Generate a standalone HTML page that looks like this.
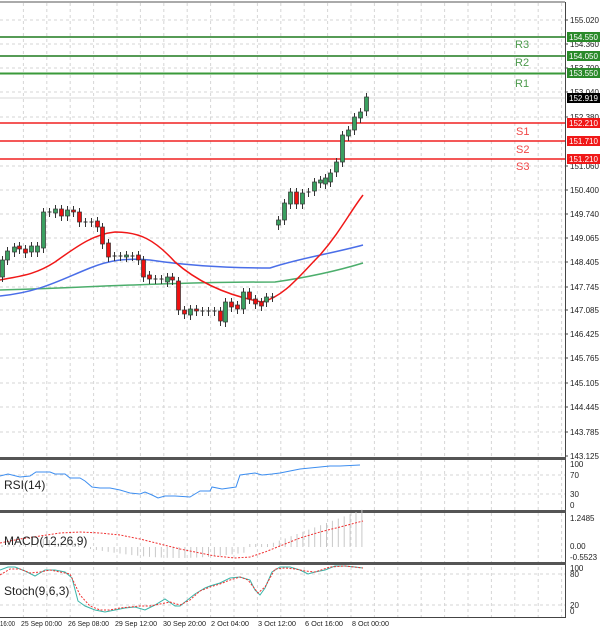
<!DOCTYPE html>
<html><head><meta charset="utf-8"><style>
html,body{margin:0;padding:0;background:#fff;}
svg{display:block;font-family:"Liberation Sans",sans-serif;}
</style></head><body>
<svg id="s" width="600" height="633" viewBox="0 0 600 633" xmlns="http://www.w3.org/2000/svg">
<rect width="600" height="633" fill="#fff"/>
<g id="grid" stroke="#d6d6d6" stroke-dasharray="3,3" stroke-width="1"></g>
<line x1="0" y1="2" x2="565" y2="2" stroke="#555" stroke-width="1"/>
<line x1="565.5" y1="2" x2="565.5" y2="617" stroke="#444" stroke-width="1"/>
<line x1="0" y1="617.5" x2="566" y2="617.5" stroke="#444"/>
<line x1="0" y1="37" x2="565" y2="37" stroke="#1e7a1e" stroke-width="1.5"/>
<line x1="0" y1="56" x2="565" y2="56" stroke="#1e7a1e" stroke-width="1.5"/>
<line x1="0" y1="73.5" x2="565" y2="73.5" stroke="#3a9a3a" stroke-width="2"/>
<line x1="0" y1="98" x2="565" y2="98" stroke="#e6e6e6" stroke-width="1.5"/>
<line x1="0" y1="123" x2="565" y2="123" stroke="#f02020" stroke-width="1.5"/>
<line x1="0" y1="141" x2="565" y2="141" stroke="#f02020" stroke-width="1.5"/>
<line x1="0" y1="159" x2="565" y2="159" stroke="#f02020" stroke-width="1.5"/>
<g font-size="11" fill="#4c9a4c"><text x="515" y="48">R3</text><text x="515" y="66">R2</text><text x="515" y="87">R1</text></g>
<g font-size="11" fill="#f04848"><text x="516" y="135">S1</text><text x="516" y="153">S2</text><text x="516" y="170">S3</text></g>
<path fill="none" stroke="#4cae6c" stroke-width="1.5" d="M0,290 C80,288 160,282 275,282 C310,277 340,270 363,263"/>
<path fill="none" stroke="#4a6ee8" stroke-width="1.5" d="M0,296 C40,292 60,280 90,268 C110,260 125,258 150,260 C190,266 230,268 270,268 C300,258 330,254 363,245"/>
<path fill="none" stroke="#f01818" stroke-width="1.5" d="M0,280 C20,276 35,275 55,262 C80,244 95,234 115,232 C140,232 155,240 175,262 C200,284 230,296 262,302 C285,296 300,275 320,255 C340,232 350,212 363,195"/>
<g id="candles"></g>
<g font-size="8" fill="#222" id="axis"></g>
<rect x="567" y="32" width="33" height="10" fill="#2a8a2a"/><text x="569" y="40" font-size="8" fill="#fff">154.550</text>
<rect x="567" y="51" width="33" height="10" fill="#2a8a2a"/><text x="569" y="59" font-size="8" fill="#fff">154.050</text>
<rect x="567" y="68" width="33" height="10" fill="#2a8a2a"/><text x="569" y="76" font-size="8" fill="#fff">153.550</text>
<rect x="567" y="93" width="33" height="10" fill="#000"/><text x="569" y="101" font-size="8" fill="#fff">152.919</text>
<rect x="567" y="118" width="33" height="10" fill="#f01818"/><text x="569" y="126" font-size="8" fill="#fff">152.210</text>
<rect x="567" y="136" width="33" height="10" fill="#f01818"/><text x="569" y="144" font-size="8" fill="#fff">151.710</text>
<rect x="567" y="154" width="33" height="10" fill="#f01818"/><text x="569" y="162" font-size="8" fill="#fff">151.210</text>
<rect x="0" y="457" width="566" height="3" fill="#555"/>
<rect x="0" y="510" width="566" height="3" fill="#555"/>
<rect x="0" y="562" width="566" height="3" fill="#555"/>
<polyline fill="none" stroke="#3d8ef0" stroke-width="1" points="0,476 8,474 20,477 30,476 36,472 50,472 55,474 65,474 70,478 80,478 85,481 92,487 100,488 110,488 120,490 130,493 140,494 145,492 152,495 158,498 165,496 175,496 190,497 195,494 200,491 210,491 212,487 222,489 236,487 240,475 255,473 262,475 272,474 280,473 290,471 300,469 310,468 320,467 330,466 340,466 360,465"/>
<text x="4" y="489" font-size="12" fill="#222">RSI(14)</text>
<g id="macd" stroke="#c8c8c8" stroke-width="1"></g>
<polyline fill="none" stroke="#f03030" stroke-width="1" stroke-dasharray="2,1.5" points="0,543 20,539 40,536 60,533 80,532 100,533 120,535 140,539 160,544 180,549 200,553 215,556 235,558 250,557 265,552 280,546 300,538 320,532 340,527 363,521"/>
<text x="4" y="545" font-size="12" fill="#222">MACD(12,26,9)</text>
<polyline fill="none" stroke="#3ab4a8" stroke-width="1" points="0,570 8,567 15,567 25,571 35,576 45,570 55,570 65,572 72,578 78,601 85,606 95,610 105,612 115,610 125,608 135,607 145,610 155,605 165,599 175,606 180,606 185,602 195,594 205,588 210,586 220,583 230,578 240,577 250,580 255,590 260,595 265,588 272,572 280,567 290,567 300,570 308,574 315,572 325,570 335,566 345,566 355,567 363,568"/>
<polyline fill="none" stroke="#f03030" stroke-width="1" stroke-dasharray="2,1.5" points="0,575 10,569 20,569 30,573 40,572 50,570 60,572 70,574 80,595 90,606 100,610 110,610 120,608 130,607 140,606 150,606 160,604 170,602 180,605 190,600 200,591 210,587 220,584 230,580 240,577 248,580 258,593 265,587 275,569 285,568 295,569 305,571 315,572 330,567 345,566 363,568"/>
<text x="4" y="595" font-size="12" fill="#222">Stoch(9,6,3)</text>
<g font-size="7" fill="#222" lengthAdjust="spacingAndGlyphs">
<text x="0" y="626" textLength="15" lengthAdjust="spacingAndGlyphs">16:00</text>
<text x="21" y="626" textLength="41" lengthAdjust="spacingAndGlyphs">25 Sep 00:00</text>
<text x="68" y="626" textLength="41" lengthAdjust="spacingAndGlyphs">26 Sep 08:00</text>
<text x="115" y="626" textLength="42" lengthAdjust="spacingAndGlyphs">29 Sep 12:00</text>
<text x="163" y="626" textLength="43" lengthAdjust="spacingAndGlyphs">30 Sep 20:00</text>
<text x="211" y="626" textLength="38" lengthAdjust="spacingAndGlyphs">2 Oct 04:00</text>
<text x="258" y="626" textLength="38" lengthAdjust="spacingAndGlyphs">3 Oct 12:00</text>
<text x="305" y="626" textLength="38" lengthAdjust="spacingAndGlyphs">6 Oct 16:00</text>
<text x="352" y="626" textLength="37" lengthAdjust="spacingAndGlyphs">8 Oct 00:00</text>
</g>
</svg>
<script>
var NS="http://www.w3.org/2000/svg";
function el(p,t,a){var e=document.createElementNS(NS,t);for(var k in a)e.setAttribute(k,a[k]);p.appendChild(e);return e;}
var g=document.getElementById("grid");
for(var x=23.4;x<565;x+=23.4){el(g,"line",{x1:x,y1:3,x2:x,y2:617});}
var ys=[20,44,68,92,117,141,166,190,214,238,262,287,310,334,358,383,407,432];
ys.forEach(function(y){el(g,"line",{x1:0,y1:y,x2:565,y2:y});});
[475,494,574,605].forEach(function(y){el(g,"line",{x1:0,y1:y,x2:565,y2:y});});
var ax=document.getElementById("axis");
var labs=["155.020","154.360","153.700","153.040","152.380","151.720","151.060","150.400","149.740","149.065","148.405","147.745","147.085","146.425","145.765","145.105","144.445","143.785","143.125"];
var ly=[20,44,68,92,117,141,166,190,214,238,262,287,310,334,358,383,407,432,456];
labs.forEach(function(l,i){if(i==5)return;el(ax,"line",{x1:565,y1:ly[i],x2:568,y2:ly[i],stroke:"#444"});var t=el(ax,"text",{x:570,y:ly[i]+3});t.textContent=l;});
[["100",467],["70",478],["30",497],["0",508],["1.2485",521],["0.00",549],["-0.5523",560],["100",571],["80",577],["20",608],["0",614]].forEach(function(a){var t=el(ax,"text",{x:570,y:a[1]});t.textContent=a[0];});
var C=[[0,260,277,1],[5,251,260,1],[12,247,252,1],[17,246,249,0],[23,249,253,0],[29,246,252,1],[35,246,252,1],[41,212,248,1],[47,212,212,2],[53,209,213,1],[59,209,216,0],[65,210,216,1],[71,210,212,0],[77,212,222,0],[83,222,222,2],[89,222,222,2],[95,221,227,0],[100,227,244,0],[106,243,257,0],[112,256,256,2],[118,256,256,2],[124,255,257,1],[130,256,256,2],[136,255,260,0],[141,260,277,0],[147,275,279,0],[153,279,279,2],[159,279,279,2],[165,277,282,1],[170,277,280,0],[176,281,310,0],[182,310,314,0],[188,309,315,1],[194,309,311,0],[200,311,311,2],[206,311,311,2],[212,311,311,2],[218,311,321,0],[223,302,322,1],[229,302,307,0],[235,305,309,0],[241,292,309,1],[247,292,299,0],[253,299,304,0],[259,302,306,0],[264,297,302,1],[270,297,297,2],[276,220,225,1],[282,203,220,1],[288,192,204,1],[294,192,204,0],[300,193,204,1],[306,192,192,2],[312,182,191,1],[318,180,183,1],[323,178,184,1],[328,173,182,1],[334,162,172,1],[340,135,162,1],[346,130,136,1],[352,117,130,1],[358,112,118,1],[364,97,111,1]];
var cg=document.getElementById("candles");
C.forEach(function(c){var x=c[0]+2.5;el(cg,"line",{x1:x,y1:c[1]-4,x2:x,y2:c[2]+5,stroke:"#333","stroke-width":1});
if(c[3]==2){el(cg,"line",{x1:c[0]+0.5,y1:c[1],x2:c[0]+4.5,y2:c[1],stroke:"#333"});}
else el(cg,"rect",{x:c[0]+0.5,y:c[1],width:4,height:Math.max(1,c[2]-c[1]),fill:c[3]?"#3aa060":"#ee1111",stroke:"#333","stroke-width":0.7});});
var m=document.getElementById("macd");
for(var i=0;i<62;i++){var x=2+i*5.9;var h;
if(i<14)h=(i<5?2:10-(i-5));else if(i<46)h=-(Math.sin((i-14)/32*Math.PI)*10+1);else h=(i-45)*2.2+2;
if(i>=42&&i<46)h=3;
el(m,"line",{x1:x,y1:547,x2:x,y2:547-h});}
</script>
</body></html>
